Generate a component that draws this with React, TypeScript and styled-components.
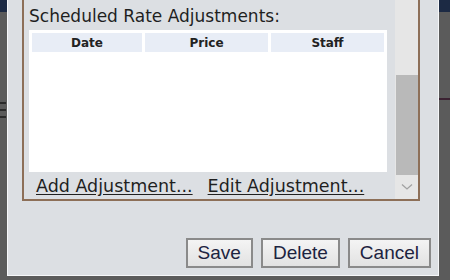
import React from 'react';
import styled, {createGlobalStyle} from 'styled-components';

const GlobalStyle = createGlobalStyle`
  html, body {
    margin: 0;
    padding: 0;
    overflow: hidden;
  }
  body {
    width: 450px;
    height: 280px;
    background: #5b5b5b;
  }
`;

const App: React.FC = ()=>{
  return (
    <>
      <GlobalStyle />
      <StyledBackdrop>
        <StyledPageEdge width={7}>
          <StyledMenuGlyph />
        </StyledPageEdge>
        <StyledDialog>
          <StyledPanel>
            <StyledPanelContent>
              <StyledHeading>Scheduled Rate Adjustments:</StyledHeading>
              <StyledTableWrapper>
                <StyledTable>
                  <thead>
                    <tr>
                      <StyledHeadCell width={110}>Date</StyledHeadCell>
                      <StyledHeadCell width={123}>Price</StyledHeadCell>
                      <StyledHeadCell width={113}>Staff</StyledHeadCell>
                    </tr>
                  </thead>
                  <tbody />
                </StyledTable>
              </StyledTableWrapper>
              <StyledLinkRow>
                <StyledLink href="#">Add Adjustment...</StyledLink>
                <StyledLink href="#">Edit Adjustment...</StyledLink>
              </StyledLinkRow>
            </StyledPanelContent>
            <StyledScrollbar>
              <StyledThumb />
              <StyledArrow>
                <svg width="12" height="8" viewBox="0 0 12 8">
                  <path d="M1 1.5 L6 6 L11 1.5" fill="none"
                    stroke="#a2a2a2" strokeWidth="1.3" />
                </svg>
              </StyledArrow>
            </StyledScrollbar>
          </StyledPanel>
          <StyledButtonRow>
            <StyledButton>Save</StyledButton>
            <StyledButton>Delete</StyledButton>
            <StyledButton>Cancel</StyledButton>
          </StyledButtonRow>
        </StyledDialog>
        <StyledPageEdge>
          <StyledAccentLine />
        </StyledPageEdge>
      </StyledBackdrop>
    </>
  );
};

const StyledBackdrop = styled.div`
  width: 450px;
  height: 280px;
  display: flex;
  align-items: flex-start;
  background: linear-gradient(#1c2a44 0 12px, #5b5b5b 12px);
`;
const StyledPageEdge = styled.div<{width?: number}>`
  flex: ${(p) => p.width ? `0 0 ${p.width}px` : '1'};
  height: 100%;
  padding-top: 102px;
  box-sizing: border-box;
`;
const StyledMenuGlyph = styled.div`
  width: 6px;
  height: 12px;
  border-top: 2px solid #2a2a2a;
  border-bottom: 2px solid #2a2a2a;
  position: relative;
  &::after {
    content: '';
    position: absolute;
    left: 0;
    right: 0;
    top: 5px;
    height: 2px;
    background: #2a2a2a;
  }
`;
const StyledAccentLine = styled.div`
  margin-top: -4px;
  height: 2px;
  background: #3b2232;
`;
const StyledDialog = styled.div`
  width: 432px;
  height: 276px;
  flex: none;
  box-sizing: border-box;
  background: #dcdfe3;
  border: 1px solid #f6f7f9;
  border-top: none;
  padding: 0 7px 7px 14px;
  display: flex;
  flex-direction: column;
  justify-content: space-between;
`;
const StyledPanel = styled.div`
  height: 201px;
  margin-right: 11px;
  box-sizing: border-box;
  border: 2px solid #8d6f58;
  border-top: none;
  display: flex;
`;
const StyledPanelContent = styled.div`
  flex: 1;
  padding: 0 8px 0 5px;
  display: flex;
  flex-direction: column;
`;
const StyledHeading = styled.div`
  height: 30px;
  line-height: 32px;
  font-family: "DejaVu Sans", Verdana, sans-serif;
  font-size: 17px;
  color: #1f1f1f;
  white-space: nowrap;
`;
const StyledTableWrapper = styled.div`
  height: 142px;
  background: #ffffff;
`;
const StyledTable = styled.table`
  border-spacing: 3px;
  border-collapse: separate;
  width: 100%;
`;
const StyledHeadCell = styled.th<{width: number}>`
  width: ${(p) => p.width}px;
  height: 19px;
  padding: 0;
  background: #e8edf6;
  font-family: "DejaVu Sans", Verdana, sans-serif;
  font-size: 12px;
  font-weight: bold;
  color: #222222;
  text-align: center;
`;
const StyledLinkRow = styled.div`
  flex: 1;
  display: flex;
  gap: 15px;
  align-items: center;
  padding-left: 7px;
`;
const StyledLink = styled.a`
  font-family: "DejaVu Sans", Verdana, sans-serif;
  font-size: 17.5px;
  color: #1f1f1f;
  text-decoration: underline;
  text-underline-offset: 2px;
  white-space: nowrap;
`;
const StyledScrollbar = styled.div`
  width: 23px;
  background: #e6e6e6;
  display: flex;
  flex-direction: column;
  padding-top: 75px;
  box-sizing: border-box;
`;
const StyledThumb = styled.div`
  height: 100px;
  margin-left: 1px;
  background: #b9b9b9;
`;
const StyledArrow = styled.div`
  flex: 1;
  display: flex;
  align-items: center;
  justify-content: center;
`;
const StyledButtonRow = styled.div`
  display: flex;
  justify-content: flex-end;
  gap: 8px;
`;
const StyledButton = styled.button`
  height: 30px;
  min-width: 66px;
  padding: 0 10px;
  border: 2px solid #8a8a8a;
  border-radius: 0;
  background: linear-gradient(#f4f4f4, #e2e2e2);
  font-family: "Liberation Sans", Arial, sans-serif;
  font-size: 19px;
  color: #1c2340;
  cursor: pointer;
`;

export default App;
